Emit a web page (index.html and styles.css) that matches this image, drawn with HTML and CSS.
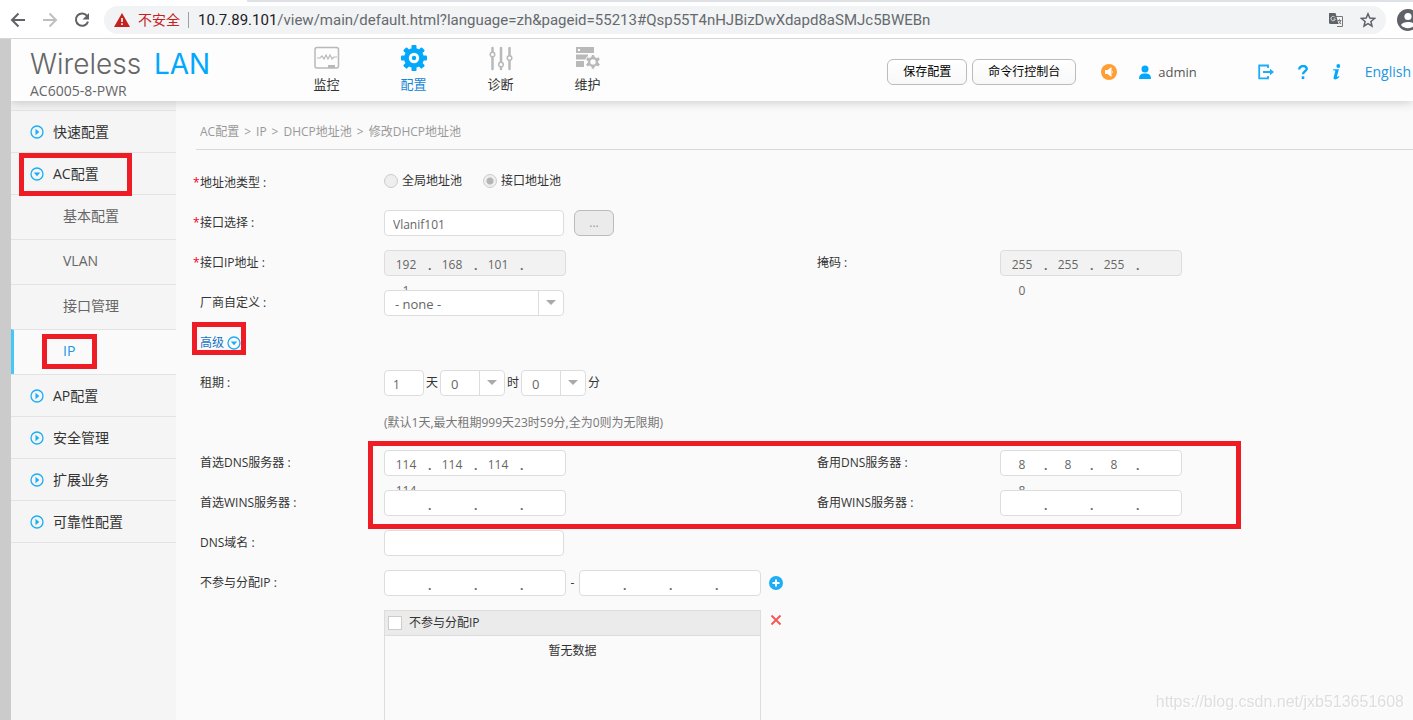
FILE: index.html
```html
<!DOCTYPE html>
<html lang="zh-CN">
<head>
<meta charset="utf-8">
<meta name="viewport" content="width=device-width, initial-scale=1">
<title>Wireless LAN</title>
<link rel="stylesheet" href="styles.css">
</head>
<body>
<svg class="defs" aria-hidden="true">
  <symbol id="arrow-right" viewBox="0 0 14 14"><circle cx="7" cy="7" r="6" fill="none" stroke="#1badf5" stroke-width="1.3"/><path d="M5.500 3.800v6.400L9.300 7z" fill="#1badf5"/></symbol>
  <symbol id="arrow-down" viewBox="0 0 14 14"><circle cx="7" cy="7" r="6" fill="none" stroke="#1badf5" stroke-width="1.3"/><path d="M3.800 5.500h6.400L7 9.300z" fill="#1badf5"/></symbol>
</svg>

<div class="browser">
  <button class="chrome-btn" aria-label="后退"><svg width="16" height="16" viewBox="0 0 16 16" fill="none" stroke="#5f6368" stroke-width="2"><path d="M15 8H2.500M8.500 1.500L2 8l6.500 6.500"/></svg></button>
  <button class="chrome-btn" aria-label="前进"><svg width="16" height="16" viewBox="0 0 16 16" fill="none" stroke="#bdbfc1" stroke-width="2"><path d="M1 8h12.500M7.500 1.500L14 8l-6.500 6.500"/></svg></button>
  <button class="chrome-btn" aria-label="刷新"><svg width="16" height="16" viewBox="0 0 16 16"><path d="M13.300 4.200A6.200 6.200 0 1 0 14 9.600" fill="none" stroke="#5f6368" stroke-width="2"/><path d="M15 1v6.500H8.500z" fill="#5f6368"/></svg></button>
  <div class="address">
    <svg width="16" height="14" viewBox="0 0 16 14"><path d="M8 0l8 14H0z" fill="#c5221f"/><path d="M7.200 5h1.600v4H7.200zM7.200 10.300h1.600v1.600H7.200z" fill="#fff"/></svg>
    <span class="insecure">不安全</span>
    <span class="url"><b>10.7.89.101</b>/view/main/default.html?language=zh&amp;pageid=55213#Qsp55T4nHJBizDwXdapd8aSMJc5BWEBn</span>
    <button class="chrome-btn tail" aria-label="翻译"><svg width="16" height="16" viewBox="0 0 16 16"><path d="M6 4.500h8.500v10H9" fill="#f1f3f4" stroke="#777" /><path d="M1 1h6.500L10.500 12H2.500A1.500 1.500 0 0 1 1 10.500z" fill="#5f6368"/><path d="M7 5.400A2.200 2.200 0 1 0 7.300 7H5.500" fill="none" stroke="#ddd" stroke-width="1"/><path d="M9.800 8.500h3.500M11.500 7.200v1.300M12.800 8.800l-2 3M11 9.500l2 2.500" stroke="#777" fill="none"/></svg></button>
    <button class="chrome-btn" aria-label="收藏"><svg width="16" height="16" viewBox="0 0 16 16"><path d="M8 1.800l1.800 4.300 4.700.4-3.600 3 1.100 4.600L8 11.700l-4 2.400 1.100-4.600-3.600-3 4.700-.4z" fill="none" stroke="#5f6368" stroke-width="1.500"/></svg></button>
  </div>
  <svg class="profile" width="22" height="22" viewBox="0 0 22 22"><circle cx="11" cy="11" r="11" fill="#5f6368"/><circle cx="11" cy="7.500" r="3.600" fill="#fff"/><path d="M4 16c1.500-4 12.500-4 14 0-3 4.200-11 4.200-14 0z" fill="#fff"/></svg>
</div>

<div class="app">
  <header class="topbar">
    <div class="brand"><h1>Wireless <span>LAN</span></h1><p>AC6005-8-PWR</p></div>
    <nav class="tabs">
      <a href="#"><svg width="28" height="28" viewBox="0 0 28 28"><rect x="2" y="3.500" width="23.500" height="20.500" rx="2" fill="none" stroke="#b9b9b9" stroke-width="1.500"/><path d="M4 14h3l2-2 2 3 2-4 2 4 2-4 2 4 2-2h3" fill="none" stroke="#b9b9b9" stroke-width="1.200"/><path d="M15 21h7v3h-7z" fill="#b9b9b9"/></svg>监控</a>
      <a href="#" class="current"><svg width="28" height="28" viewBox="0 0 28 28"><g fill="#02a8fb"><circle cx="14" cy="14" r="10"/><rect x="11.500" y="1" width="5" height="26" rx="1"/><rect x="1" y="11.500" width="26" height="5" rx="1"/><g transform="rotate(45 14 14)"><rect x="11.500" y="1" width="5" height="26" rx="1"/><rect x="1" y="11.500" width="26" height="5" rx="1"/></g></g><circle cx="14" cy="14" r="5.200" fill="#fdfdfd"/><circle cx="14" cy="14" r="2.200" fill="#02a8fb"/></svg>配置</a>
      <a href="#"><svg width="28" height="28" viewBox="0 0 28 28" fill="#fdfdfd" stroke="#b9b9b9"><path d="M5.500 4v21M14 4v21M22.500 4v21" stroke-width="2.500" stroke-linecap="round"/><circle cx="5.500" cy="10.500" r="2.300" stroke-width="1.500"/><circle cx="14" cy="20.500" r="2.300" stroke-width="1.500"/><circle cx="22.500" cy="14" r="2.300" stroke-width="1.500"/></svg>诊断</a>
      <a href="#"><svg width="28" height="28" viewBox="0 0 28 28"><path d="M2 3h18v6H2zM2 10.500h12v5H2zM2 17h8v6H2z" fill="#b9b9b9"/><path d="M4 5h2v2H4z" fill="#fff"/><g fill="#b9b9b9" stroke="#fdfdfd"><path d="M17.500 10.500h3l.5 2.300 1.500.8 2.200-.8 1.600 2.600-1.700 1.600v1.700l1.700 1.600-1.600 2.600-2.200-.8-1.500.8-.5 2.300h-3l-.5-2.300-1.500-.8-2.200.8-1.600-2.600 1.700-1.600V17l-1.700-1.600 1.600-2.600 2.200.8 1.500-.8z"/></g><circle cx="19" cy="17.900" r="2.700" fill="#fdfdfd"/></svg>维护</a>
    </nav>
    <div class="tools">
      <button class="btn">保存配置</button>
      <button class="btn">命令行控制台</button>
      <button class="icon-btn speaker" aria-label="通知"><svg width="16" height="16" viewBox="0 0 16 16"><circle cx="8" cy="8" r="8" fill="#ff9e33"/><path d="M4 6h2.500L10.500 3v10L6.500 10H4zM11 6.500a2 2 0 0 1 0 3z" fill="#fff"/></svg></button>
      <span class="user"><svg width="12" height="14" viewBox="0 0 12 14" fill="#02a8fb"><circle cx="6" cy="4" r="3.500"/><path d="M0 14c0-3 1-5 4-5.500h4c3 .5 4 2.500 4 5.500z"/></svg>admin</span>
      <button class="icon-btn" aria-label="退出"><svg width="16" height="16" viewBox="0 0 16 16"><path d="M10 4V1.500H1.200v12.800H10V12M5 8h8" fill="none" stroke="#1badf5" stroke-width="1.800"/><path d="M12 4.700L16 8l-4 3.300z" fill="#1badf5"/></svg></button>
      <button class="icon-btn" aria-label="帮助"><svg width="10" height="14" viewBox="0 0 10 14"><path d="M1.300 4.500C1 0 9 0 8.700 4 8.600 6.300 5 6.300 5 9.300" fill="none" stroke="#02a8fb" stroke-width="2.400"/><path d="M3.700 11.300h2.600V14H3.700z" fill="#02a8fb"/></svg></button>
      <button class="icon-btn" aria-label="关于"><svg width="9" height="16" viewBox="0 0 9 16"><circle cx="6.300" cy="2" r="1.900" fill="#02a8fb"/><path d="M1 5.300h5.900L5 12.300c-.2.900.6.700 2-.3l.4.900C5.500 15 3 16 2 15c-.7-.7-.4-1.800 0-3l1.300-5c.1-.6-.5-.8-2.300-.8z" fill="#02a8fb"/></svg></button>
      <a href="#" class="lang">English</a>
    </div>
  </header>

  <div class="body">
    <nav class="sidebar">
      <a href="#" class="item"><svg><use href="#arrow-right"/></svg>快速配置</a>
      <a href="#" class="item marked"><svg><use href="#arrow-down"/></svg>AC配置</a>
      <a href="#" class="sub">基本配置</a>
      <a href="#" class="sub">VLAN</a>
      <a href="#" class="sub">接口管理</a>
      <a href="#" class="sub current marked">IP</a>
      <a href="#" class="item"><svg><use href="#arrow-right"/></svg>AP配置</a>
      <a href="#" class="item"><svg><use href="#arrow-right"/></svg>安全管理</a>
      <a href="#" class="item"><svg><use href="#arrow-right"/></svg>扩展业务</a>
      <a href="#" class="item"><svg><use href="#arrow-right"/></svg>可靠性配置</a>
    </nav>

    <main class="content">
      <p class="crumbs"><span>AC配置</span><span>&gt;</span><span>IP</span><span>&gt;</span><span>DHCP地址池</span><span>&gt;</span><span>修改DHCP地址池</span></p>
      <form class="form">
        <div class="row">
          <span class="label required">地址池类型 :</span>
          <div class="field radios">
            <label><input type="radio" name="pool" disabled>全局地址池</label>
            <label><input type="radio" name="pool" checked disabled>接口地址池</label>
          </div>
        </div>
        <div class="row">
          <label class="label required" for="iface">接口选择 :</label>
          <div class="field"><input class="text" id="iface" value="Vlanif101"><button type="button" class="more">...</button></div>
        </div>
        <div class="row">
          <label class="label required" for="ip1">接口IP地址 :</label>
          <div class="field"><div class="ip off"><span><input id="ip1" value="192" disabled>.</span><span><input aria-label="第二段" value="168" disabled>.</span><span><input aria-label="第三段" value="101" disabled>.</span><span><input aria-label="第四段" value="1" disabled></span></div></div>
          <label class="label" for="mask1">掩码 :</label>
          <div class="field"><div class="ip off"><span><input id="mask1" value="255" disabled>.</span><span><input aria-label="第二段" value="255" disabled>.</span><span><input aria-label="第三段" value="255" disabled>.</span><span><input aria-label="第四段" value="0" disabled></span></div></div>
        </div>
        <div class="row">
          <label class="label" for="vendor">厂商自定义 :</label>
          <div class="field"><span class="select wide"><select id="vendor"><option>- none -</option></select></span></div>
        </div>
        <div class="row">
          <a href="#" class="advanced marked">高级<svg><use href="#arrow-down"/></svg></a>
        </div>
        <div class="row">
          <label class="label" for="days">租期 :</label>
          <div class="field lease"><input class="text short" id="days" value="1"><label for="days">天</label><span class="select"><select id="hours"><option>0</option></select></span><label for="hours">时</label><span class="select"><select id="mins"><option>0</option></select></span><label for="mins">分</label></div>
        </div>
        <div class="row"><p class="hint">(默认1天,最大租期999天23时59分,全为0则为无限期)</p></div>
        <div class="servers marked">
          <div class="row">
            <label class="label" for="dns1">首选DNS服务器 :</label>
            <div class="field"><div class="ip"><span><input id="dns1" value="114">.</span><span><input aria-label="第二段" value="114">.</span><span><input aria-label="第三段" value="114">.</span><span><input aria-label="第四段" value="114"></span></div></div>
            <label class="label" for="dns2">备用DNS服务器 :</label>
            <div class="field"><div class="ip"><span><input id="dns2" value="8">.</span><span><input aria-label="第二段" value="8">.</span><span><input aria-label="第三段" value="8">.</span><span><input aria-label="第四段" value="8"></span></div></div>
          </div>
          <div class="row">
            <label class="label" for="wins1">首选WINS服务器 :</label>
            <div class="field"><div class="ip"><span><input id="wins1">.</span><span><input aria-label="第二段">.</span><span><input aria-label="第三段">.</span><span><input aria-label="第四段"></span></div></div>
            <label class="label" for="wins2">备用WINS服务器 :</label>
            <div class="field"><div class="ip"><span><input id="wins2">.</span><span><input aria-label="第二段">.</span><span><input aria-label="第三段">.</span><span><input aria-label="第四段"></span></div></div>
          </div>
        </div>
        <div class="row">
          <label class="label" for="domain">DNS域名 :</label>
          <div class="field"><input class="text" id="domain"></div>
        </div>
        <div class="row">
          <label class="label" for="from">不参与分配IP :</label>
          <div class="field range"><div class="ip"><span><input id="from">.</span><span><input aria-label="第二段">.</span><span><input aria-label="第三段">.</span><span><input aria-label="第四段"></span></div><i>-</i><div class="ip"><span><input aria-label="结束地址">.</span><span><input aria-label="第二段">.</span><span><input aria-label="第三段">.</span><span><input aria-label="第四段"></span></div>
            <button type="button" class="icon-btn add" aria-label="添加"><svg width="14" height="14" viewBox="0 0 14 14"><circle cx="7" cy="7" r="7" fill="#1badf5"/><path d="M7 3.500v7M3.500 7h7" stroke="#fff" stroke-width="2"/></svg></button></div>
        </div>
        <div class="list">
          <div class="frame">
            <table>
              <thead><tr><th class="pick"><input type="checkbox" aria-label="全选"></th><th>不参与分配IP</th></tr></thead>
              <tbody><tr><td colspan="2">暂无数据</td></tr></tbody>
            </table>
          </div>
          <button type="button" class="icon-btn" aria-label="删除"><svg width="12" height="12" viewBox="0 0 12 12"><path d="M1.500 1.500l9 9M10.500 1.500l-9 9" stroke="#f9534f" stroke-width="1.800"/></svg></button>
        </div>
      </form>
    </main>
  </div>
</div>
<div class="watermark">https://blog.csdn.net/jxb513651608</div>
</body>
</html>
```
FILE: styles.css
```css
*, *::before, *::after { box-sizing: border-box; }
body {
  margin: 0;
  min-height: 100vh;
  display: flex;
  flex-direction: column;
  overflow-x: hidden;
  background: #fafafa;
  color: #333;
  font: 12px/18px "Open Sans", "Noto Sans CJK SC", sans-serif;
}
h1, p { margin: 0; font-weight: 400; }
a { color: inherit; text-decoration: none; }
button, input, select { font: inherit; color: inherit; }
.defs { position: absolute; width: 0; height: 0; }

/* Browser toolbar */
.browser {
  display: flex;
  align-items: center;
  gap: 16px;
  height: 39px;
  padding: 2px 0 0 10px;
  background: linear-gradient(#dee1e6, #dee1e6) 247px 0 / 100% 2px no-repeat #fff;
  border-bottom: 1px solid #d5d6d8;
  overflow: hidden;
}
.chrome-btn, .icon-btn { display: flex; padding: 0; border: 0; background: none; }
.address {
  flex: 1;
  display: flex;
  align-items: center;
  height: 28px;
  margin-left: -2px;
  padding: 0 10px;
  border-radius: 14px;
  background: #f1f3f4;
  font-size: 14px;
}
.insecure { margin-left: 8px; padding-right: 8px; border-right: 1px solid #9aa0a6; color: #c5221f; line-height: 16px; }
.url { margin-left: 9px; color: #666a6e; font-family: Roboto, sans-serif; font-size: 15px; white-space: nowrap; }
.url b { font-weight: 400; color: #202124; }
.tail { margin: 0 16px 0 auto; }
.profile { flex: none; margin: 0 -6px 0 -5px; }

/* Header */
.app { flex: 1; display: flex; flex-direction: column; border-left: 11px solid #cbcbcb; }
.topbar {
  position: relative;
  z-index: 2;
  display: flex;
  height: 62px;
  background: #fdfdfd;
  box-shadow: 0 1px 10px rgba(0, 0, 0, .2);
  clip-path: inset(0 0 -14px 0);
}
.brand { width: 272px; padding: 9px 0 0 19px; color: #666; }
.brand h1 { color: #666; font: 300 28px/32px Inter, sans-serif; white-space: nowrap; }
.brand h1 span { margin-left: 5px; color: #02a8fb; font-weight: 400; }
.brand p { font-size: 14px; line-height: 22px; }
.tabs { display: flex; }
.tabs a { display: flex; flex-direction: column; align-items: center; width: 87px; padding-top: 5px; font-size: 13px; line-height: 24px; }
.tabs .current { color: #1687d6; }
.tools { display: flex; align-items: center; gap: 24px; margin-left: auto; padding: 4px 2px 0 0; }
.btn {
  height: 26px;
  padding: 0 15px;
  border: 1px solid #bbb;
  border-radius: 6px;
  background: linear-gradient(#fff, #f8f8f8);
  color: #000;
}
.btn + .btn { margin-left: -19px; }
.speaker { margin: 0 -2px 0 1px; }
.user { display: flex; align-items: center; gap: 7px; margin-right: 37px; font-size: 13px; color: #555; }
.lang { font-size: 14px; color: #2196e3; }

/* Sidebar */
.body { flex: 1; display: flex; }
.sidebar { width: 165px; padding-top: 9px; background: #f5f5f5; box-shadow: inset 0 9px 0 #f2f2f2; }
.sidebar a { display: flex; align-items: center; height: 42px; border-top: 1px solid #e3e3e3; font-size: 14px; }
.sidebar .item { padding-left: 19px; gap: 9px; }
.sidebar svg, .advanced svg { width: 14px; height: 14px; }
.sidebar .sub { height: 45px; padding: 0 0 2px 52px; color: #666; }
.sidebar .current { border-left: 3px solid #45c8f8; padding-left: 49px; background: #fafafa; color: #2196e3; }
.sidebar a:last-child { height: 43px; border-bottom: 1px solid #e3e3e3; }

/* Highlight frames */
.marked { position: relative; z-index: 1; }
.marked::after { content: ""; position: absolute; border: 5px solid #ee1c25; pointer-events: none; }
.item.marked::after { left: 8px; top: 0; width: 113px; height: 43px; }
.sub.marked::after { left: 28px; top: 4px; width: 55px; height: 35px; }
.advanced.marked::after { left: -8px; top: -12px; width: 54px; height: 33px; }
.servers.marked::after { left: 168px; right: 172px; top: -2px; bottom: -6px; }

/* Content */
.content { flex: 1; display: flex; flex-direction: column; min-width: 0; padding-left: 24px; }
.crumbs { display: flex; gap: 5px; margin-left: -4px; padding: 22px 0 8px 4px; border-bottom: 1px solid #d8d8d8; color: #999; }
.form { flex: 1; display: flex; flex-direction: column; padding-top: 13px; }
.row { display: grid; grid-template-columns: 184px 433fr 183px 413fr; align-items: center; height: 40px; }
.label { position: relative; }
.required::before { content: "*"; position: absolute; left: -7px; color: #e02; }
.field { display: flex; align-items: center; }
.radios { gap: 21px; padding-bottom: 4px; }
.radios label { display: flex; align-items: center; gap: 4px; }
.radios input { appearance: none; width: 14px; height: 14px; margin: 0; border: 1px solid #ccc; border-radius: 50%; background: #eee; }
.radios input:checked { background: radial-gradient(circle, #b5b5b5 3px, #eee 4px); }
.text, .ip, .select { height: 26px; border: 1px solid #ddd; border-radius: 4px; background: #fff; color: #666; }
.text { width: 180px; padding: 2px 8px 0; }
.short { width: 40px; }
.more { width: 40px; height: 26px; margin-left: 10px; padding: 0; border: 1px solid #bbb; border-radius: 6px; background: #ebebeb; color: #999; }
.ip { display: flex; flex-wrap: wrap; width: 182px; padding-left: 3px; }
.ip span { display: flex; gap: 4px; width: 46px; height: 26px; padding-top: 2px; font-weight: 700; line-height: 26px; }
.ip input { width: 36px; height: 24px; padding: 0; border: 0; background: none; text-align: center; color: #666; font-weight: 400; }
.off { background: #f2f2f2; }
.select { position: relative; display: flex; width: 65px; font-size: 13px; }
.select select { appearance: none; flex: 1; padding: 2px 0 0 10px; border: 0; background: none; outline: 0; }
.select::before { content: ""; position: absolute; right: 0; top: 0; width: 25px; height: 24px; border-left: 1px solid #ddd; pointer-events: none; }
.select::after { content: ""; position: absolute; right: 7px; top: 9px; border: 5px solid transparent; border-top-color: #aaa; border-bottom: 0; pointer-events: none; }
.wide { width: 180px; }
.lease label { width: 16px; text-align: center; }
.advanced { display: flex; align-items: center; gap: 3px; width: 42px; color: #1673c4; }
.hint { grid-column: 2 / -1; color: #777; }
.range i { width: 13px; text-align: center; font-style: normal; }
.add { margin-left: 8px; }

.list { flex: 1; display: flex; align-items: flex-start; gap: 9px; margin: 7px 0 0 184px; }
.frame { align-self: stretch; width: 377px; border: 1px solid #ddd; border-bottom: 0; }
.list .icon-btn { margin-top: 4px; }
table { width: 100%; border-collapse: collapse; }
th { height: 24px; padding: 0 4px; background: #ebebeb; border-bottom: 1px solid #ddd; font-weight: 400; text-align: left; }
.pick { width: 20px; padding: 0 0 0 3px; }
.pick input { display: block; appearance: none; width: 14px; height: 14px; margin: 0; border: 1px solid #ccc; background: #fff; }
td { height: 31px; padding: 0; text-align: center; }
.watermark { position: fixed; right: 9px; bottom: 9px; color: #dedede; font: 16px/18px "Liberation Sans", sans-serif; text-shadow: 1px 1px 0 #fff; }
```
